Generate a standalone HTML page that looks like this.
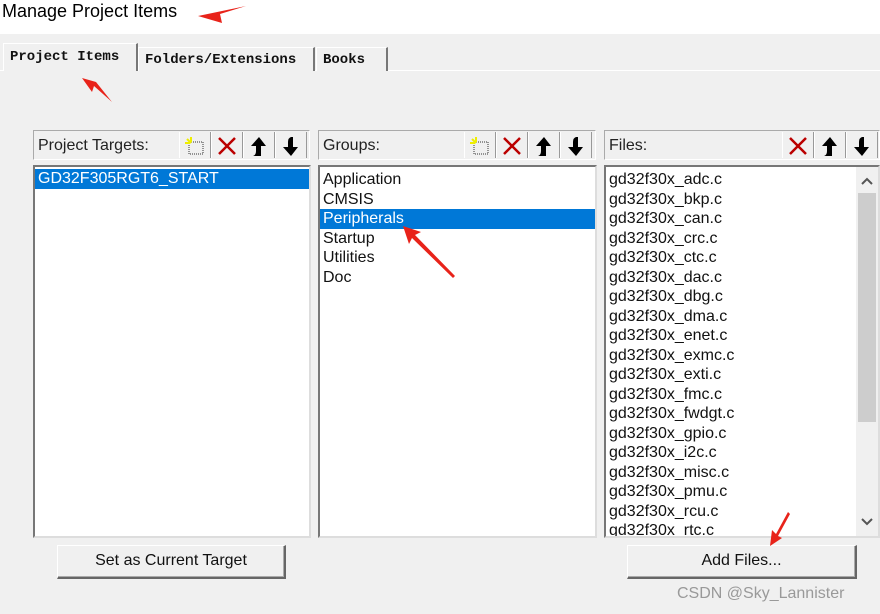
<!DOCTYPE html>
<html><head><style>
body{margin:0;width:880px;height:614px;position:relative;overflow:hidden;background:#f0f0f0;font-family:"Liberation Sans",sans-serif;}
.a{position:absolute}
.top{left:0;top:0;width:880px;height:34px;background:#fff}
.title{left:2px;top:1px;font-size:18px;color:#000}
.tab{position:absolute;font-family:"Liberation Mono",monospace;font-weight:bold;font-size:14px;color:#111;border:1px solid #fff;border-right:2px solid #777;border-bottom:none;background:#f0f0f0;padding-left:6px;box-sizing:border-box}
.hdr{position:absolute;height:30px;border:1px solid #aaa;border-right-color:#fff;border-bottom-color:#fff;box-sizing:border-box;font-size:16px;color:#222}
.hdr span{position:absolute;left:4px;top:6px}
.btn{position:absolute;top:1px;width:32px;height:26px;border-left:1px solid #fff;border-right:1px solid #999;box-sizing:border-box;text-align:center}
.btn svg{margin-top:3px}
.list{position:absolute;background:#fff;border:2px solid #777;border-right-color:#ddd;border-bottom-color:#ddd;box-sizing:border-box;font-size:16px;color:#111}
.row{height:19.5px;line-height:19.5px;padding-left:3px;white-space:nowrap}
.sel{background:#0078d7;color:#fff}
.pb{position:absolute;height:34px;border:1px solid #fff;border-right:2px solid #666;border-bottom:2px solid #666;box-sizing:border-box;background:#f0f0f0;font-size:16px;text-align:center;line-height:30px;color:#111;box-shadow:inset -1px -1px 0 #aaa}
</style></head><body>
<div class="a top"></div>
<div class="a title">Manage Project Items</div>
<svg class="a" style="left:198px;top:4px" width="50" height="20"><polygon points="0,12 48,2 22,10 24,19" fill="#e8231a"/></svg>
<div class="a" style="left:0;top:70px;width:880px;height:1px;background:#fff"></div>
<div class="tab" style="left:3px;top:43px;width:135px;height:28px;padding-top:5px;background:#f0f0f0">Project Items</div>
<div class="tab" style="left:138px;top:47px;width:177px;height:24px;padding-top:4px">Folders/Extensions</div>
<div class="tab" style="left:316px;top:47px;width:72px;height:24px;padding-top:4px">Books</div>
<svg class="a" style="left:82px;top:78px" width="32" height="26"><polygon points="0,0 10,14 12,8 30,24 14,4" fill="#e8231a"/></svg>

<svg width="0" height="0" style="position:absolute"><defs>
<g id="nw"><rect x="6" y="7" width="14" height="12" fill="none" stroke="#333" stroke-dasharray="1,1"/><path d="M4 4l4 4M8 2l0 5M2 8l5 0" stroke="#ee0" stroke-width="2"/></g>
<g id="x"><path d="M4 3L20 19M20 3L4 19" stroke="#b00" stroke-width="2.5"/></g>
<g id="up"><path d="M12 2L4 11h5v5q0 4-3 5h8v-10h5z" fill="#000"/></g>
<g id="dn"><path d="M12 21L4 12h5V7q0-4 3-5h2v10h5z" fill="#000"/></g>
</defs></svg>

<div class="hdr" style="left:33px;top:130px;width:277px"><span>Project Targets:</span>
<div class="btn" style="left:145px"><svg width="24" height="22"><use href="#nw"/></svg></div>
<div class="btn" style="left:177px"><svg width="24" height="22"><use href="#x"/></svg></div><div class="btn" style="left:209px"><svg width="24" height="22"><use href="#up"/></svg></div><div class="btn" style="left:241px"><svg width="24" height="22"><use href="#dn"/></svg></div></div>
<div class="list" style="left:33px;top:165px;width:278px;height:373px;padding-top:2px"><div class="row sel">GD32F305RGT6_START</div></div>

<div class="hdr" style="left:318px;top:130px;width:278px"><span>Groups:</span>
<div class="btn" style="left:145px"><svg width="24" height="22"><use href="#nw"/></svg></div>
<div class="btn" style="left:177px"><svg width="24" height="22"><use href="#x"/></svg></div><div class="btn" style="left:209px"><svg width="24" height="22"><use href="#up"/></svg></div><div class="btn" style="left:241px"><svg width="24" height="22"><use href="#dn"/></svg></div></div>
<div class="list" style="left:318px;top:165px;width:279px;height:373px;padding-top:3px">
<div class="row">Application</div><div class="row">CMSIS</div><div class="row sel">Peripherals</div><div class="row">Startup</div><div class="row">Utilities</div><div class="row">Doc</div></div>
<svg class="a" style="left:403px;top:226px" width="54" height="54"><polygon points="0,0 18,6 12,9 52,50 50,52 9,12 6,18" fill="#e8231a"/></svg>

<div class="hdr" style="left:604px;top:130px;width:276px"><span>Files:</span>
<div class="btn" style="left:177px"><svg width="24" height="22"><use href="#x"/></svg></div><div class="btn" style="left:209px"><svg width="24" height="22"><use href="#up"/></svg></div><div class="btn" style="left:241px"><svg width="24" height="22"><use href="#dn"/></svg></div></div>
<div class="list" style="left:604px;top:165px;width:276px;height:373px;padding-top:3px;overflow:hidden">
<div class="row">gd32f30x_adc.c</div><div class="row">gd32f30x_bkp.c</div><div class="row">gd32f30x_can.c</div><div class="row">gd32f30x_crc.c</div><div class="row">gd32f30x_ctc.c</div><div class="row">gd32f30x_dac.c</div><div class="row">gd32f30x_dbg.c</div><div class="row">gd32f30x_dma.c</div><div class="row">gd32f30x_enet.c</div><div class="row">gd32f30x_exmc.c</div><div class="row">gd32f30x_exti.c</div><div class="row">gd32f30x_fmc.c</div><div class="row">gd32f30x_fwdgt.c</div><div class="row">gd32f30x_gpio.c</div><div class="row">gd32f30x_i2c.c</div><div class="row">gd32f30x_misc.c</div><div class="row">gd32f30x_pmu.c</div><div class="row">gd32f30x_rcu.c</div><div class="row">gd32f30x_rtc.c</div>
<div class="a" style="left:250px;top:0;width:22px;height:371px;background:#f0f0f0"></div>
<div class="a" style="left:252px;top:26px;width:18px;height:229px;background:#cdcdcd"></div>
<svg class="a" style="left:255px;top:10px" width="12" height="8"><path d="M1 7l5-5 5 5" stroke="#555" stroke-width="2" fill="none"/></svg>
<svg class="a" style="left:255px;top:351px" width="12" height="8"><path d="M1 1l5 5 5-5" stroke="#555" stroke-width="2" fill="none"/></svg>
</div>

<div class="pb" style="left:57px;top:545px;width:229px">Set as Current Target</div>
<div class="pb" style="left:627px;top:545px;width:230px">Add Files...</div>
<svg class="a" style="left:766px;top:512px" width="24" height="36"><polygon points="22,0 10,22 6,18 4,34 16,26 12,24 24,2" fill="#e8231a"/></svg>
<div class="a" style="left:677px;top:585px;font-size:16px;color:#999">CSDN @Sky_Lannister</div>
</body></html>
